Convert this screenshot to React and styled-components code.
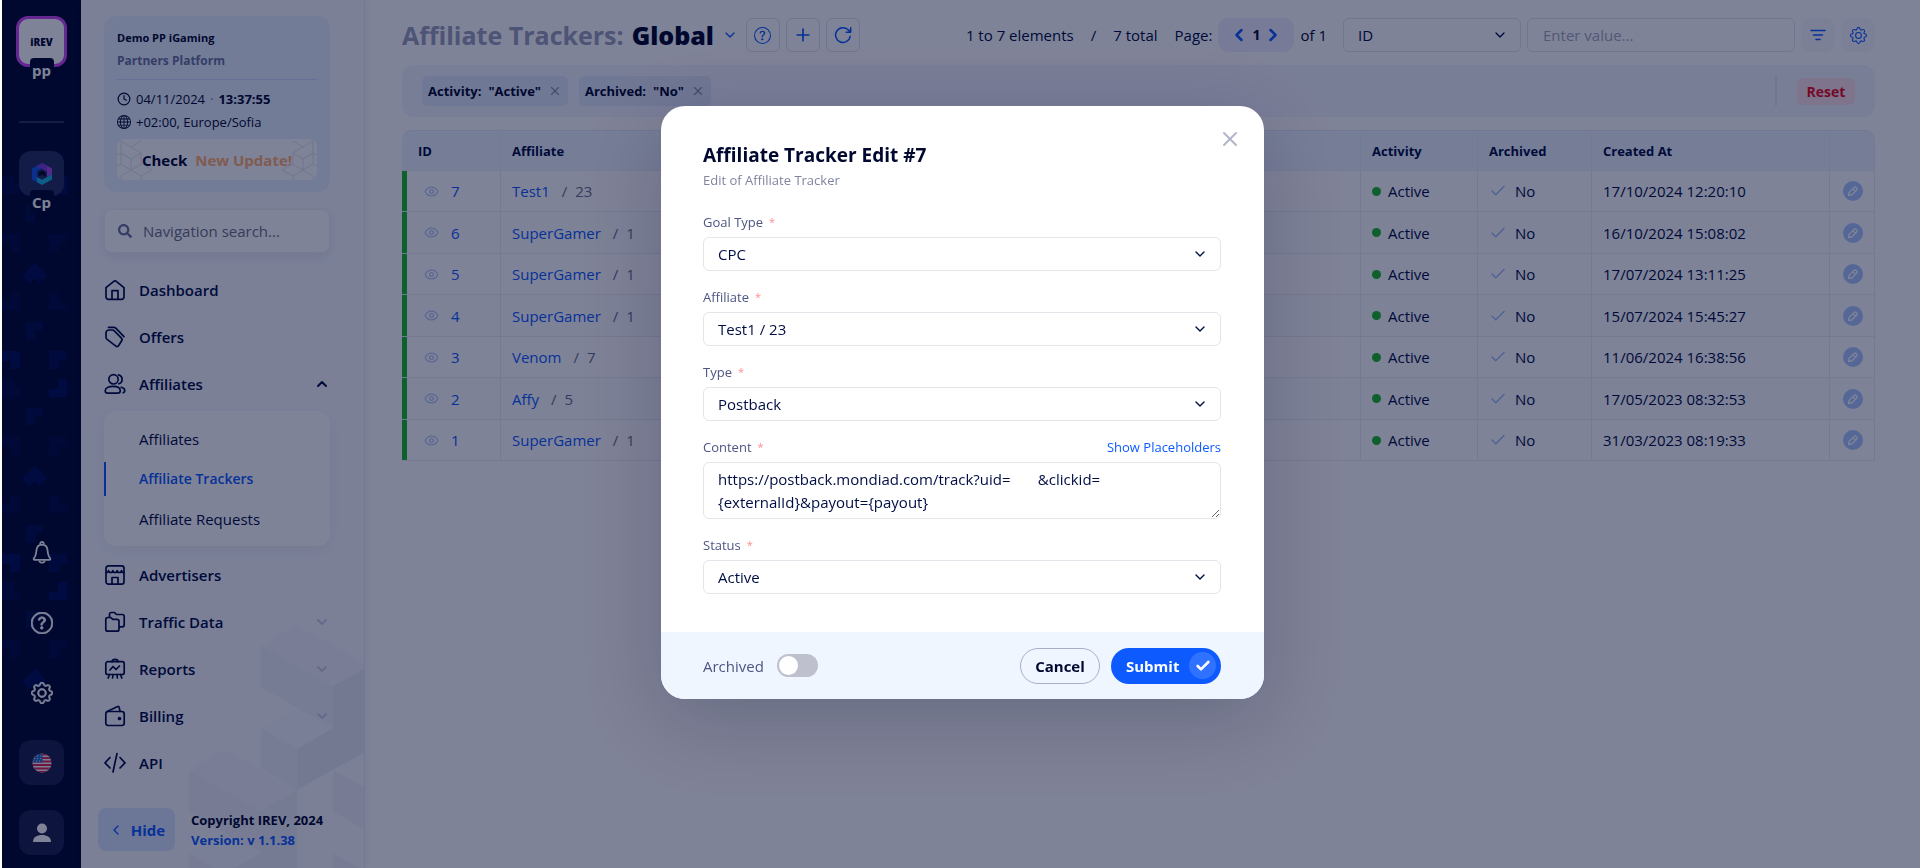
import React, { useState } from 'react';
import styled, { createGlobalStyle } from 'styled-components';
import {
    BsArrowClockwise,
    BsGear,
    BsGlobe,
    BsQuestionCircle,
} from 'react-icons/bs';
import { FaSearch } from 'react-icons/fa';
import { Check, ChevronDown, ChevronLeft, ChevronRight, ChevronUp, Clock, Eye, Plus, X } from 'lucide-react';


const GlobalStyle = createGlobalStyle`
  *, *::before, *::after {
    box-sizing: border-box;
  }

  body {
    margin: 0;
    background: #ffffff;
    color: #00082f;
    font-family: 'Open Sans', 'Noto Sans', sans-serif;
    font-size: 14px;
    line-height: 20px;
  }

  button, input, select, textarea {
    font-family: inherit;
    font-size: inherit;
    color: inherit;
    margin: 0;
  }

  button {
    cursor: pointer;
  }

  a {
    text-decoration: none;
  }
`;

const Page = styled.div`
  display: flex;
  min-height: 100vh;
  padding-left: 2px;
`;

/* ---------- rail ---------- */

const Rail = styled.aside`
  position: relative;
  flex: none;
  width: 79px;
  padding: 16px 0 13px;
  background: #00082f;
  display: flex;
  flex-direction: column;
  align-items: center;
`;

const RailPattern = styled.svg`
  position: absolute;
  top: 175px;
  left: 0;
  width: 67px;
  height: 514px;
  fill: #00188a;
`;

const AppLink = styled.a`
  position: relative;
  display: flex;
  align-items: center;
  justify-content: center;
  width: ${({ $active }) => ($active ? 51 : 45)}px;
  height: ${({ $active }) => ($active ? 51 : 45)}px;
  border: ${({ $active }) => ($active ? '3px solid #cb46f5' : 'none')};
  border-radius: 12px;
  background: ${({ $active }) => ($active ? '#ffffff' : '#272e5e')};
  color: #00082f;
  font-size: 10px;
  font-weight: 800;
`;

const AppTag = styled.span`
  position: absolute;
  left: 50%;
  bottom: -18px;
  transform: translateX(-50%);
  width: 24px;
  height: 24px;
  border-radius: 4px 4px 0 0;
  background: #00082f;
  color: #ffffff;
  font-size: 15px;
  font-weight: 700;
  line-height: 24px;
  text-align: center;
`;

const RailDivider = styled.div`
  width: 45px;
  height: 2px;
  margin: 54px 0 28px;
  background: #2b335c;
`;

const RailBottom = styled.div`
  position: relative;
  margin-top: auto;
  display: flex;
  flex-direction: column;
  gap: 25px;
`;

const RailButton = styled.button`
  width: 45px;
  height: 45px;
  padding: 0;
  border: none;
  border-radius: 12px;
  background: ${({ $filled }) => ($filled ? '#1a214c' : 'transparent')};
  color: #ffffff;
  display: flex;
  align-items: center;
  justify-content: center;
`;

/* ---------- sidebar ---------- */

const Sidebar = styled.aside`
  position: relative;
  flex: none;
  width: 284px;
  padding: 16px 34px 17px 23px;
  background: #f6f9ff;
  border-right: 1px solid #e4eafb;
  box-shadow: 2px 0 6px rgba(20, 40, 140, 0.06);
  display: flex;
  flex-direction: column;
`;

const Cubes = styled.svg`
  position: absolute;
  right: 0;
  bottom: 0;
  width: 180px;
  height: 248px;
`;

const InfoCard = styled.div`
  height: 176px;
  padding: 12px 13px;
  border-radius: 12px;
  background: #e7f0ff;
`;

const BrandName = styled.div`
  font-size: 11px;
  font-weight: 700;
  line-height: 20px;
`;

const BrandKind = styled.div`
  padding: 2px 0 7px;
  border-bottom: 1px solid #c8d8fa;
  color: #6b739d;
  font-size: 12px;
  font-weight: 700;
  line-height: 22px;
`;

const InfoLine = styled.div`
  display: flex;
  align-items: center;
  gap: 5px;
  margin-top: ${({ $first }) => ($first ? 8 : 1)}px;
  font-size: 13px;
  line-height: 22px;

  i {
    color: #6b739d;
    font-style: normal;
  }
`;

const UpdateButton = styled.button`
  position: relative;
  width: 100%;
  height: 41px;
  margin-top: 6px;
  padding: 0;
  overflow: hidden;
  border: none;
  border-radius: 8px;
  background: #ffffff;
  color: #00082f;
  font-size: 15px;
  font-weight: 700;
  display: flex;
  align-items: center;
  justify-content: center;
  gap: 8px;

  em {
    color: #ffae70;
    font-style: normal;
  }
`;

const Hexes = styled.svg`
  position: absolute;
  top: 0;
  ${({ $side }) => $side}: 0;
  width: 36px;
  height: 41px;
  fill: none;
  stroke: #e3e3e8;
`;

const SearchBox = styled.label`
  height: 44px;
  margin-top: 17px;
  padding: 0 13px;
  display: flex;
  align-items: center;
  gap: 11px;
  border-radius: 8px;
  border: 1px solid #edf0f6;
  background: #ffffff;
  box-shadow: 0 4px 12px rgba(0, 8, 47, 0.08);
  color: #6b739d;

  svg {
    flex: none;
  }

  input {
    width: 100%;
    min-width: 0;
    padding: 0;
    border: none;
    outline: none;
    background: transparent;
    font-size: 15px;
  }

  input::placeholder {
    color: #6d7187;
    opacity: 1;
  }
`;

const Nav = styled.nav`
  position: relative;
  margin-top: 13px;
`;

const NavItem = styled.a`
  height: 47px;
  display: flex;
  align-items: center;
  gap: 13px;
  color: #000d45;
  font-size: 15px;
  font-weight: 600;

  svg:last-of-type:not(:first-of-type) {
    margin-left: auto;
  }
`;

const SubMenu = styled.div`
  margin: 4px 0 5px;
  padding: 8px 0 7px;
  border-radius: 12px;
  background: #ffffff;
  box-shadow: 0 4px 16px rgba(0, 8, 47, 0.05);
`;

const SubItem = styled.a`
  height: 40px;
  display: flex;
  align-items: center;
  color: ${({ $active }) => ($active ? '#0d5bff' : '#000d45')};
  font-size: ${({ $active }) => ($active ? 14 : 15)}px;
  font-weight: ${({ $active }) => ($active ? 600 : 400)};

  &::before {
    content: '';
    width: 2px;
    height: 34px;
    margin-right: 33px;
    background: ${({ $active }) => ($active ? '#0d5bff' : 'transparent')};
  }
`;

const SidebarFooter = styled.div`
  position: relative;
  margin: auto -12px 0 -6px;
  display: flex;
  align-items: center;
  gap: 16px;
`;

const HideButton = styled.button`
  flex: none;
  width: 77px;
  height: 43px;
  padding: 0 4px;
  border: none;
  border-radius: 8px;
  background: #d8e6ff;
  color: #0d5bff;
  font-size: 15px;
  font-weight: 700;
  display: flex;
  align-items: center;
  justify-content: center;
  gap: 7px;
`;

const Copyright = styled.div`
  font-size: 13px;
  font-weight: 700;
  line-height: 20px;
  white-space: nowrap;

  a {
    color: #0d5bff;
  }
`;

/* ---------- main ---------- */

const Main = styled.main`
  flex: 1;
  min-width: 0;
  padding: 18px 45px 20px 37px;
`;

const Toolbar = styled.header`
  display: flex;
  align-items: center;
  height: 34px;
  gap: 6px;
`;

const Title = styled.h1`
  margin: 0 2px 0 0;
  display: flex;
  align-items: center;
  gap: 8px;
  color: #9aa0bd;
  font-size: 25px;
  font-weight: 700;
  line-height: 34px;
  white-space: nowrap;

  strong {
    color: #00082f;
  }

  svg {
    color: #0d5bff;
  }
`;

const IconButton = styled.button`
  flex: none;
  width: 34px;
  height: 34px;
  padding: 0;
  border: ${({ $soft }) => ($soft ? 'none' : '1px solid #dfe3ee')};
  border-radius: ${({ $soft }) => ($soft ? 10 : 6)}px;
  background: ${({ $soft }) => ($soft ? '#f6f8fd' : 'transparent')};
  color: #0d5bff;
  display: flex;
  align-items: center;
  justify-content: center;
`;

const Summary = styled.div`
  margin: 0 10px 0 auto;
  display: flex;
  gap: 17px;
  font-size: 15px;
  color: #000d45;
  white-space: nowrap;
`;

const Pager = styled.div`
  flex: none;
  width: 76px;
  height: 34px;
  margin-left: -10px;
  border-radius: 10px;
  background: #eeefff;
  display: flex;
  align-items: center;
  justify-content: center;
  gap: 3px;
  font-weight: 700;

  button {
    padding: 0;
    border: none;
    background: none;
    color: #0d5bff;
    display: flex;
  }
`;

const PageTotal = styled.span`
  flex: none;
  margin-right: 10px;
  font-size: 15px;
`;

const SelectBox = styled.div`
  position: relative;
  flex: none;
  width: ${({ $width }) => $width || '100%'};

  select {
    appearance: none;
    width: 100%;
    height: 34px;
    padding: 0 40px 0 14px;
    border: 1px solid #e3e5ea;
    border-radius: 6px;
    outline: none;
    background: #ffffff;
    color: #000d45;
    font-size: 15px;
  }

  svg {
    position: absolute;
    right: 13px;
    top: 9px;
    color: #000d45;
    pointer-events: none;
  }
`;

const ValueInput = styled.input`
  flex: none;
  width: 268px;
  height: 34px;
  padding: 0 15px;
  border: 1px solid #e3e5ea;
  border-radius: 6px;
  outline: none;
  font-size: 15px;

  &::placeholder {
    color: #a4a9c0;
    opacity: 1;
  }
`;

const FilterBar = styled.div`
  height: 52px;
  margin-top: 13px;
  padding: 0 20px;
  display: flex;
  align-items: center;
  gap: 11px;
  border-radius: 12px;
  background: #f2f4ff;
`;

const Chip = styled.div`
  height: 30px;
  padding: 0 6px;
  display: flex;
  align-items: center;
  gap: 7px;
  border-radius: 6px;
  background: #dfe8f9;
  font-size: 13px;
  font-weight: 700;
  white-space: nowrap;

  button {
    padding: 0;
    border: none;
    background: none;
    color: #8a90a8;
    display: flex;
  }
`;

const BarDivider = styled.div`
  width: 2px;
  height: 30px;
  margin: 0 9px 0 auto;
  background: #dde6f8;
`;

const ResetButton = styled.button`
  width: 58px;
  height: 27px;
  padding: 0;
  border: none;
  border-radius: 6px;
  background: #fce1e8;
  color: #ea0b1c;
  font-size: 14px;
  font-weight: 700;
`;

const Table = styled.table`
  width: 100%;
  margin-top: 13px;
  border-collapse: separate;
  border-spacing: 0;
  table-layout: fixed;
  font-size: 15px;
  color: #000d45;

  th, td {
    padding: 0 12px 0 11px;
    border-bottom: 1px solid #e9edf5;
    border-right: 1px solid #e9edf5;
    text-align: left;
    white-space: nowrap;
  }

  th {
    height: 41px;
    border-top: 1px solid #dfe7f6;
    background: #edf4ff;
    font-size: 13px;
    font-weight: 700;
  }

  th:first-child {
    padding-left: 16px;
    border-top-left-radius: 10px;
  }

  th:last-child {
    border-top-right-radius: 10px;
  }

  td {
    height: 41px;
  }

  tr:nth-child(even) td {
    height: 42px;
    background: #fbfcff;
  }

  td:first-child {
    padding: 0;
  }

  td:last-child {
    padding-left: 13px;
  }
`;

const IdCell = styled.div`
  height: 40px;
  padding-left: 17px;
  display: flex;
  align-items: center;
  gap: 12px;
  border-left: 5px solid #1cb82a;

  tr:nth-child(even) & {
    height: 41px;
  }

  svg {
    color: #b3c8f5;
  }
`;

const BlueLink = styled.a`
  color: #0d5bff;
`;

const AffiliateCell = styled.div`
  display: flex;
  gap: 12px;
  color: #6b6f88;
`;

const AffiliateRef = styled.div`
  display: flex;
  gap: 8px;
`;

const Mark = styled.div`
  display: flex;
  align-items: center;
  gap: ${({ $gap }) => $gap}px;

  svg {
    color: #a3bff8;
  }
`;

const Dot = styled.span`
  width: 9px;
  height: 9px;
  border-radius: 50%;
  background: #1cb82a;
`;

const EditButton = styled.button`
  width: 20px;
  height: 20px;
  padding: 0;
  border: none;
  border-radius: 50%;
  background: #a9c6ff;
  color: #ffffff;
  display: flex;
  align-items: center;
  justify-content: center;
`;

/* ---------- modal ---------- */

const ModalOverlay = styled.div`
  position: fixed;
  top: 0;
  left: 2px;
  right: 0;
  bottom: 0;
  padding: 106px 17px 40px 20px;
  background-color: rgba(0, 8, 47, 0.5);
  display: flex;
  justify-content: center;
  align-items: flex-start;
`;

const ModalContent = styled.form`
  position: relative;
  width: 100%;
  overflow: hidden;
  border-radius: 24px;
  background: white;
`;

const ModalShadow = styled.div`
  width: 100%;
  max-width: 603px;
  border-radius: 24px;
  box-shadow: 0 20px 80px rgba(0, 8, 47, 0.2);
`;

const ModalBody = styled.div`
  padding: 37px 43px 38px 42px;
  display: flex;
  flex-direction: column;
  gap: 16px;
`;

const ModalHead = styled.div`
  margin-bottom: 7px;
`;

const ModalTitle = styled.h2`
  margin: 0 0 4px;
  font-size: 19px;
  font-weight: 700;
  line-height: 24px;
`;

const ModalSub = styled.p`
  margin: 0;
  color: #8085a0;
  font-size: 13px;
  line-height: 18px;
`;

const CloseButton = styled.button`
  position: absolute;
  top: 21px;
  right: 22px;
  padding: 0;
  border: none;
  background: none;
  color: #b3b5c9;
  display: flex;
`;

const Field = styled.div`
  display: flex;
  flex-direction: column;
  gap: 5px;
`;

const LabelRow = styled.div`
  display: flex;
  justify-content: space-between;
  font-size: 13px;
  color: #4d5683;

  sup {
    margin-left: 6px;
    color: #ff8f8f;
    font-size: 11px;
    line-height: 0;
    vertical-align: 1px;
  }
`;

const ContentArea = styled.textarea`
  display: block;
  width: 100%;
  height: 57px;
  padding: 5px 14px;
  border: 1px solid #e3e5ea;
  border-radius: 6px;
  outline: none;
  overflow: hidden;
  resize: vertical;
  color: #000d45;
  font-size: 15px;
  line-height: 23px;
`;

const ModalFooter = styled.div`
  height: 67px;
  padding: 0 43px 0 42px;
  display: flex;
  align-items: center;
  gap: 11px;
  background: #eff6ff;
`;

const SwitchLabel = styled.label`
  margin-right: auto;
  display: flex;
  align-items: center;
  gap: 13px;
  color: #4d5683;
  font-size: 15px;
`;

const Switch = styled.input`
  appearance: none;
  width: 41px;
  height: 23px;
  border-radius: 12px;
  background: ${({ checked }) => (checked ? '#0d5bff' : '#bfc0ce')};
  cursor: pointer;

  &::before {
    content: '';
    display: block;
    width: 19px;
    height: 19px;
    margin: 2px;
    margin-left: ${({ checked }) => (checked ? 20 : 2)}px;
    border-radius: 50%;
    background: #ffffff;
  }
`;

const CancelButton = styled.button`
  width: 80px;
  height: 36px;
  padding: 0;
  border: 1px solid #a9aec9;
  border-radius: 18px;
  background: transparent;
  color: #00082f;
  font-size: 15px;
  font-weight: 700;
`;

const SubmitButton = styled.button`
  width: 110px;
  height: 36px;
  padding: 0 5px 0 15px;
  border: none;
  border-radius: 18px;
  background: #0d5bff;
  color: #ffffff;
  font-size: 15px;
  font-weight: 700;
  display: flex;
  align-items: center;
  justify-content: space-between;

  span {
    width: 27px;
    height: 27px;
    border-radius: 50%;
    background: #2f72ff;
    display: flex;
    align-items: center;
    justify-content: center;
  }
`;

/* ---------- icons ---------- */

const navPaths = {
    home: <path d="M2 8.6 9.8 2.3a2 2 0 0 1 2.4 0L20 8.6V18a2.4 2.4 0 0 1-2.4 2.4H4.400A2.400 2.400 0 0 1 2 18zM8 20.400V11.600h6v8.800" />,
    tag: (
        <>
            <path d="M2 11V7a3 3 0 0 1 3-3h3.200a3 3 0 0 1 2.100.900l6.900 6.900a2.400 2.400 0 0 1 .3 3.200l-3 4.800a1.700 1.700 0 0 1-2.600.3L3.100 13.400A3 3 0 0 1 2 11z" />
            <path d="M4.500 1.300h5.200a3 3 0 0 1 2.100.900l8.200 8.500" />
        </>
    ),
    users: (
        <>
            <circle cx="9.500" cy="6.300" r="4.700" />
            <path d="M1.200 18c0-3 3.600-4.600 7.800-4.600s7.300 1.600 7.300 4.300c0 1.500-1.200 2.400-2.700 2.400H3.700c-1.500 0-2.500-.8-2.500-2.100zM14.500 1.900a4.600 4.600 0 0 1 .3 8.900M17.200 14.200c2.200.600 3.600 1.800 3.600 3.300 0 1.100-.6 1.900-1.600 2.300" />
        </>
    ),
    store: (
        <>
            <rect x="2" y="1.800" width="18" height="18.400" rx="2.400" />
            <path d="M2 8.500c1.500 0 2.500-.7 2.500-2 0 1.300 1 2 2.200 2s2.100-.7 2.100-2c0 1.300 1 2 2.200 2s2.200-.7 2.200-2c0 1.300 1 2 2.200 2s2.100-.7 2.100-2c0 1.300 1 2 2.500 2M8 20v-6.500h6V20" />
        </>
    ),
    folders: (
        <>
            <path d="M1.800 8.500a2 2 0 0 1 2-2h2.700c1 0 1.500 1.800 2.500 1.800h4a2 2 0 0 1 2 2v7.900a2 2 0 0 1-2 2H3.800a2 2 0 0 1-2-2z" />
            <path d="M5.500 6.300V3.500a2 2 0 0 1 2-2h2.700c1 0 1.500 2 2.500 2h5.500a2 2 0 0 1 2 2v8.300a2 2 0 0 1-2 2h-3" />
        </>
    ),
    report: (
        <>
            <rect x="1.800" y="3.700" width="18.400" height="12.800" rx="2" />
            <path d="M8 3.700c0-1.600 1.300-2.400 3-2.400s3 .8 3 2.400M6 12l3-3.500 3 3L15.500 8M5.500 16.500 4.200 20M9 16.500 8.600 20M13 16.500l.4 3.500M16.500 16.500l1.300 3.500" />
        </>
    ),
    wallet: (
        <>
            <rect x="1.800" y="6.500" width="18.400" height="14" rx="2.400" />
            <path d="M3 6.500 13.700 1.600a1 1 0 0 1 1.400.7l1 4.200" />
            <circle cx="15.500" cy="13.500" r="1" fill="currentColor" />
        </>
    ),
    code: <path d="M6 5.500 1 10.800 6 16M16 5.500l5 5.300L16 16M13 1.500 9 20" />,
};

const NavIcon = ({ name }) => (
    <svg width="22" height="22" viewBox="0 0 22 22" fill="none" stroke="currentColor" strokeWidth="1.700" strokeLinecap="round" strokeLinejoin="round">
        {navPaths[name]}
    </svg>
);

const BellIcon = () => (
    <svg width="20" height="23" viewBox="0 0 20 23" fill="none" stroke="currentColor" strokeWidth="1.800" strokeLinecap="round" strokeLinejoin="round">
        <path d="M8.300 3.300a1.800 1.800 0 1 1 3.400 0M10 3.600c-3.200 0-5.200 2.300-5.500 5.400-.3 3.400-.7 6-2.600 8.300-.5.700-.1 1.500.7 1.500h14.800c.8 0 1.200-.8.700-1.500-1.900-2.300-2.300-4.900-2.600-8.300-.3-3.100-2.300-5.400-5.500-5.400z" />
        <path d="M7.500 20.500c1.200 1.600 3.800 1.600 5 0" />
    </svg>
);

const RefreshIcon = () => (
    <svg width="18" height="18" viewBox="0 0 18 18" fill="none" stroke="currentColor" strokeWidth="1.500" strokeLinecap="round" strokeLinejoin="round">
        <path d="M16.300 10.200A7.400 7.400 0 1 1 14.300 3.900L16.500 6M16.700 1.800V6.300h-4.500" />
    </svg>
);

const CubeLogo = () => (
    <svg width="20" height="22" viewBox="0 0 20 22">
        <path d="M10 0 0 5.500v11l5 2.700V8.200l5-2.700z" fill="#1259e8" />
        <path d="M10 0v5.500l5 2.700v5.600l5-2.500V5.500z" fill="#a64be8" />
        <path d="M10 0 4 3.300l6 2.600 5 2.300v-5.500z" fill="#7a3fd6" />
        <path d="M20 11.300 10 16.700l-5-2.800v5.300L10 22l10-5.500z" fill="#18b4dc" />
        <path d="m10 7.500 3.500 2v4L10 11.800l-3.500 1.700v-4z" fill="#00082f" />
    </svg>
);

const Flag = () => (
    <svg width="20" height="20" viewBox="0 0 20 20">
        <clipPath id="flag"><circle cx="10" cy="10" r="9.500" /></clipPath>
        <g clipPath="url(#flag)">
            <rect width="20" height="20" fill="#f4f4f8" />
            <path d="M0 1.500h20M0 5h20M0 8.500h20M0 12h20M0 15.500h20M0 19h20" stroke="#e0224e" strokeWidth="2" />
            <rect width="10.500" height="9.500" fill="#2f6fc4" />
            <path d="M2 3h8M2 5.500h8M1 8h9" stroke="#cfe0f7" strokeDasharray="1 2" />
        </g>
    </svg>
);

const Person = () => (
    <svg width="20" height="20" viewBox="0 0 20 20" fill="#ffffff">
        <circle cx="10" cy="5.500" r="5" />
        <path d="M1 19c0-5 4-7 9-7s9 2 9 7z" />
    </svg>
);

const FilterIcon = () => (
    <svg width="18" height="14" viewBox="0 0 18 14" stroke="currentColor" strokeWidth="1.500" strokeLinecap="round">
        <path d="M2 2.500h14M4.500 7h9M7 11.500h4" />
    </svg>
);

const PencilIcon = () => (
    <svg width="12" height="12" viewBox="0 0 12 12" fill="none" stroke="currentColor" strokeWidth="1.300" strokeLinejoin="round">
        <path d="m1.600 10.400.5-3 5-5a1.500 1.500 0 0 1 2 0l.6.600a1.500 1.500 0 0 1 0 2l-5 5zM5.900 3.700l2.500 2.500" />
    </svg>
);

const Pattern = () => (
    <RailPattern viewBox="0 175 67 514" aria-hidden="true">
        {[-203, 0, 203, 406].map((dy) => (
            <g key={dy} transform={`translate(-2 ${dy})`}>
                <path opacity="0.4" d="M22 275l13-12 12 12-7 8-5-5-6 5z" />
                <path opacity="0.2" d="M11 293h9v17H2v-9h9zM49 293h10v9h8v8H49z" />
                <path opacity="0.25" d="M26 322h17v8h-8v10h-9z" />
                <path opacity="0.4" d="M2 351h18v18h-9v-8H2z" />
                <path opacity="0.3" d="M49 351h18v10h-8v8H49z" />
                <path opacity="0.2" d="M2 379h12v8h6v10H2z" />
                <path opacity="0.4" d="M58 379h9v18H49v-8h9z" />
                <path opacity="0.25" d="M26 408h17v9h-8v8h-9z" />
                <path opacity="0.2" d="M2 437h18v18h-9v-9H2zM49 437h18v9h-8v9H49z" />
            </g>
        ))}
    </RailPattern>
);

const HexDrawing = ({ side }) => (
    <Hexes $side={side} viewBox="0 0 36 41" aria-hidden="true">
        <path
            transform={side === 'right' ? 'matrix(-1 0 0 1 36 0)' : undefined}
            d="M14 31V20L4 14 0 16M4 14V2L14 8l10-6M14 20l10-6-10-6M14 31l-10 6M14 31l10 6 11-6-10-6-11 6-10-6-4 2M24 37v4M4 37v4M4 2 0 0M4 14l10 6M4 25V14M24 14v11"
        />
    </Hexes>
);

const CubeDrawing = () => (
    <Cubes viewBox="0 0 180 248" aria-hidden="true">
        <g fill="#00082f">
            <path opacity="0.015" d="M77 26l36-21 67 38v6l-31 17z" />
            <path opacity="0.035" d="M77 26l72 40v42l-36-20-36-21z" />
            <path opacity="0.055" d="M149 66l31-17v84l-31 17-36 20v-41l36-21z" />
            <path opacity="0.01" d="M77 108l36-20 36 20-36 21z" />
            <path opacity="0.035" d="M77 108l36 21v41l-36-21z" />
            <path opacity="0.015" d="M5 150l36-21 72 41-36 21z" />
            <path opacity="0.03" d="M5 150l72 41v42l-36-20-36-21z" />
            <path opacity="0.045" d="M77 191l36-21v78H50l27-15z" />
            <path opacity="0.01" d="M5 233l36-20 36 20-27 15H30z" />
            <path opacity="0.03" d="M149 150l31 17v42l-31-17zM149 233l26 15h-26zM5 233l25 15H5z" />
        </g>
    </Cubes>
);

/* ---------- data ---------- */

const rows = [
    { id: 7, affiliate: 'Test1', ref: 23, created: '17/10/2024 12:20:10' },
    { id: 6, affiliate: 'SuperGamer', ref: 1, created: '16/10/2024 15:08:02' },
    { id: 5, affiliate: 'SuperGamer', ref: 1, created: '17/07/2024 13:11:25' },
    { id: 4, affiliate: 'SuperGamer', ref: 1, created: '15/07/2024 15:45:27' },
    { id: 3, affiliate: 'Venom', ref: 7, created: '11/06/2024 16:38:56' },
    { id: 2, affiliate: 'Affy', ref: 5, created: '17/05/2023 08:32:53' },
    { id: 1, affiliate: 'SuperGamer', ref: 1, created: '31/03/2023 08:19:33' },
];

const postback = 'https://postback.mondiad.com/track?uid=\u00a0\u00a0\u00a0\u00a0\u00a0\u00a0\u00a0&clickid=\n{externalId}&payout={payout}';

const SelectField = ({ id, label, value }) => (
    <Field>
        <LabelRow>
            <label htmlFor={id}>{label}<sup>*</sup></label>
        </LabelRow>
        <SelectBox>
            <select id={id} defaultValue={value}>
                <option>{value}</option>
            </select>
            <ChevronDown size={16} />
        </SelectBox>
    </Field>
);

const LeftRail = () => (
    <Rail>
        <Pattern />
        <AppLink href="#pp" $active>
            iREV
            <AppTag>pp</AppTag>
        </AppLink>
        <RailDivider />
        <AppLink href="#cp">
            <CubeLogo />
            <AppTag>Cp</AppTag>
        </AppLink>
        <RailBottom>
            <RailButton aria-label="Notifications"><BellIcon /></RailButton>
            <RailButton aria-label="Help"><BsQuestionCircle size={22} strokeWidth={0.5} /></RailButton>
            <RailButton aria-label="Settings"><BsGear size={22} strokeWidth={0.5} /></RailButton>
            <RailButton aria-label="Language" $filled><Flag /></RailButton>
            <RailButton aria-label="Profile" $filled><Person /></RailButton>
        </RailBottom>
    </Rail>
);

const SideNav = () => (
    <Sidebar>
        <CubeDrawing />
        <InfoCard>
            <BrandName>Demo PP iGaming</BrandName>
            <BrandKind>Partners Platform</BrandKind>
            <InfoLine $first>
                <Clock size={14} />
                <span>04/11/2024</span>
                <i>·</i>
                <b>13:37:55</b>
            </InfoLine>
            <InfoLine>
                <BsGlobe size={14} />
                <span>+02:00, Europe/Sofia</span>
            </InfoLine>
            <UpdateButton>
                <HexDrawing side="left" />
                <HexDrawing side="right" />
                Check <em>New Update!</em>
            </UpdateButton>
        </InfoCard>
        <SearchBox>
            <FaSearch size={14} />
            <input type="text" aria-label="Navigation search" placeholder="Navigation search..." />
        </SearchBox>
        <Nav>
            <NavItem href="#dashboard"><NavIcon name="home" />Dashboard</NavItem>
            <NavItem href="#offers"><NavIcon name="tag" />Offers</NavItem>
            <NavItem href="#affiliates"><NavIcon name="users" />Affiliates<ChevronUp size={16} strokeWidth={3} /></NavItem>
            <SubMenu>
                <SubItem href="#list">Affiliates</SubItem>
                <SubItem href="#trackers" $active>Affiliate Trackers</SubItem>
                <SubItem href="#requests">Affiliate Requests</SubItem>
            </SubMenu>
            <NavItem href="#advertisers"><NavIcon name="store" />Advertisers</NavItem>
            <NavItem href="#traffic"><NavIcon name="folders" />Traffic Data<ChevronDown size={16} color="#c6cee2" strokeWidth={3} /></NavItem>
            <NavItem href="#reports"><NavIcon name="report" />Reports<ChevronDown size={16} color="#c6cee2" strokeWidth={3} /></NavItem>
            <NavItem href="#billing"><NavIcon name="wallet" />Billing<ChevronDown size={16} color="#c6cee2" strokeWidth={3} /></NavItem>
            <NavItem href="#api"><NavIcon name="code" />API</NavItem>
        </Nav>
        <SidebarFooter>
            <HideButton><ChevronLeft size={16} />Hide</HideButton>
            <Copyright>
                Copyright IREV, 2024<br />
                <a href="#version">Version: v 1.1.38</a>
            </Copyright>
        </SidebarFooter>
    </Sidebar>
);

const TrackersTable = () => (
    <Table>
        <colgroup>
            <col width="99" />
            <col />
            <col width="117" />
            <col width="114" />
            <col width="238" />
            <col width="45" />
        </colgroup>
        <thead>
            <tr>
                <th>ID</th>
                <th>Affiliate</th>
                <th>Activity</th>
                <th>Archived</th>
                <th>Created At</th>
                <th aria-label="Actions" />
            </tr>
        </thead>
        <tbody>
            {rows.map((row) => (
                <tr key={row.id}>
                    <td>
                        <IdCell>
                            <Eye size={15} />
                            <BlueLink href={`#tracker-${row.id}`}>{row.id}</BlueLink>
                        </IdCell>
                    </td>
                    <td>
                        <AffiliateCell>
                            <BlueLink href="#affiliate">{row.affiliate}</BlueLink>
                            <AffiliateRef><span>/</span>{row.ref}</AffiliateRef>
                        </AffiliateCell>
                    </td>
                    <td><Mark $gap={7}><Dot />Active</Mark></td>
                    <td><Mark $gap={8}><Check size={18} strokeWidth={2} />No</Mark></td>
                    <td>{row.created}</td>
                    <td><EditButton aria-label="Edit"><PencilIcon /></EditButton></td>
                </tr>
            ))}
        </tbody>
    </Table>
);

const EditModal = ({ onClose }) => {
    const [archived, setArchived] = useState(false);

    return (
        <ModalOverlay>
            <ModalShadow>
                <ModalContent onSubmit={(e) => e.preventDefault()}>
                    <ModalBody>
                        <ModalHead>
                            <ModalTitle>Affiliate Tracker Edit #7</ModalTitle>
                            <ModalSub>Edit of Affiliate Tracker</ModalSub>
                        </ModalHead>
                        <SelectField id="goal" label="Goal Type" value="CPC" />
                        <SelectField id="affiliate" label="Affiliate" value="Test1 / 23" />
                        <SelectField id="type" label="Type" value="Postback" />
                        <Field>
                            <LabelRow>
                                <label htmlFor="content">Content<sup>*</sup></label>
                                <BlueLink href="#placeholders">Show Placeholders</BlueLink>
                            </LabelRow>
                            <ContentArea id="content" defaultValue={postback} />
                        </Field>
                        <SelectField id="status" label="Status" value="Active" />
                    </ModalBody>
                    <ModalFooter>
                        <SwitchLabel>
                            Archived
                            <Switch type="checkbox" checked={archived} onChange={(e) => setArchived(e.target.checked)} />
                        </SwitchLabel>
                        <CancelButton type="button" onClick={onClose}>Cancel</CancelButton>
                        <SubmitButton type="submit">Submit<span><Check size={16} strokeWidth={4} /></span></SubmitButton>
                    </ModalFooter>
                    <CloseButton type="button" aria-label="Close" onClick={onClose}>
                        <X size={24} strokeWidth={2} />
                    </CloseButton>
                </ModalContent>
            </ModalShadow>
        </ModalOverlay>
    );
};

const App = () => {
    const [showModal, setShowModal] = useState(true);

    return (
        <>
            <GlobalStyle />
            <Page>
                <LeftRail />
                <SideNav />
                <Main>
                    <Toolbar>
                        <Title>
                            Affiliate Trackers: <strong>Global</strong>
                            <ChevronDown size={16} />
                        </Title>
                        <IconButton aria-label="Help"><BsQuestionCircle size={17} /></IconButton>
                        <IconButton aria-label="Add"><Plus size={20} /></IconButton>
                        <IconButton aria-label="Refresh"><RefreshIcon /></IconButton>
                        <Summary>
                            <span>1 to 7 elements</span>
                            <span>/</span>
                            <span>7 total</span>
                            <span>Page:</span>
                        </Summary>
                        <Pager>
                            <button aria-label="Previous page"><ChevronLeft size={20} strokeWidth={3} /></button>
                            1
                            <button aria-label="Next page"><ChevronRight size={20} strokeWidth={3} /></button>
                        </Pager>
                        <PageTotal>of 1</PageTotal>
                        <SelectBox $width="178px">
                            <select aria-label="Search field" defaultValue="ID">
                                <option>ID</option>
                            </select>
                            <ChevronDown size={16} />
                        </SelectBox>
                        <ValueInput type="text" aria-label="Search value" placeholder="Enter value..." />
                        <IconButton aria-label="Filters" $soft><FilterIcon /></IconButton>
                        <IconButton aria-label="Table settings" $soft><BsGear size={17} /></IconButton>
                    </Toolbar>
                    <FilterBar>
                        <Chip><span>Activity:</span><span>"Active"</span><button aria-label="Remove activity filter"><X size={14} /></button></Chip>
                        <Chip><span>Archived:</span><span>"No"</span><button aria-label="Remove archived filter"><X size={14} /></button></Chip>
                        <BarDivider />
                        <ResetButton>Reset</ResetButton>
                    </FilterBar>
                    <TrackersTable />
                </Main>
            </Page>
            {showModal && <EditModal onClose={() => setShowModal(false)} />}
        </>
    );
};

export default App;
